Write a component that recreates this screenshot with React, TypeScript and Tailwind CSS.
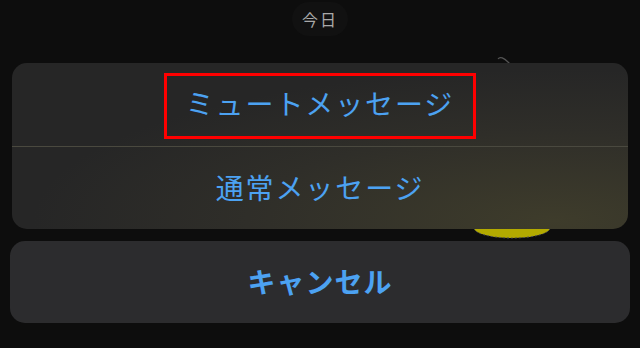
import React from "react";

export default function App() {
  const font = { fontFamily: '"Noto Sans CJK JP", "Noto Sans", sans-serif' };
  return (
    <div
      className="relative w-[640px] h-[348px] overflow-hidden bg-[#0d0d0d] flex flex-col"
      style={font}
    >
      {/* background sticker hints */}
      <svg className="absolute left-[470px] top-[50px]" width="100" height="200" viewBox="0 0 100 200">
        <path d="M28 9 C30 6 34 8 38 12 L41 15" stroke="#555" strokeWidth="1.2" fill="none" />
        <ellipse cx="42" cy="178" rx="38" ry="10" fill="#b3aa00" stroke="#555" strokeWidth="1" strokeDasharray="2 2" />
      </svg>

      <div className="flex justify-center pt-[2px] h-[37px]">
        <div className="h-[34px] px-[10px] rounded-full bg-[#111111] flex items-center text-[16px] text-[#a9a9a9] tracking-[2px]">
          今日
        </div>
      </div>

      <div className="relative z-10 mt-[26px] mx-[12px] h-[166px] rounded-[15px] overflow-hidden bg-[radial-gradient(ellipse_at_88%_95%,#3e3c2b_0%,#2f2e29_40%,#262626_68%)] flex flex-col">
        <div className="h-[83px] flex justify-center pt-[10px]">
          <div className="h-[66px] w-[312px] border-[3px] border-[#ff0000] flex items-center justify-center pb-[6px] text-[28px] leading-none tracking-[1.9px] text-[#4ca2f2]">
            ミュートメッセージ
          </div>
        </div>
        <div className="h-px bg-[#4a493f]" />
        <div className="flex-1 flex items-center justify-center pb-[2px] text-[28px] leading-none tracking-[1.9px] text-[#4ca2f2]">
          通常メッセージ
        </div>
      </div>

      <div className="relative z-10 mt-[12px] mx-[10px] h-[82px] rounded-[15px] bg-[#2c2c2e] flex items-center justify-center pb-[3px] text-[28px] font-bold leading-none tracking-[1px] text-[#4ca2f2]">
        キャンセル
      </div>
    </div>
  );
}
